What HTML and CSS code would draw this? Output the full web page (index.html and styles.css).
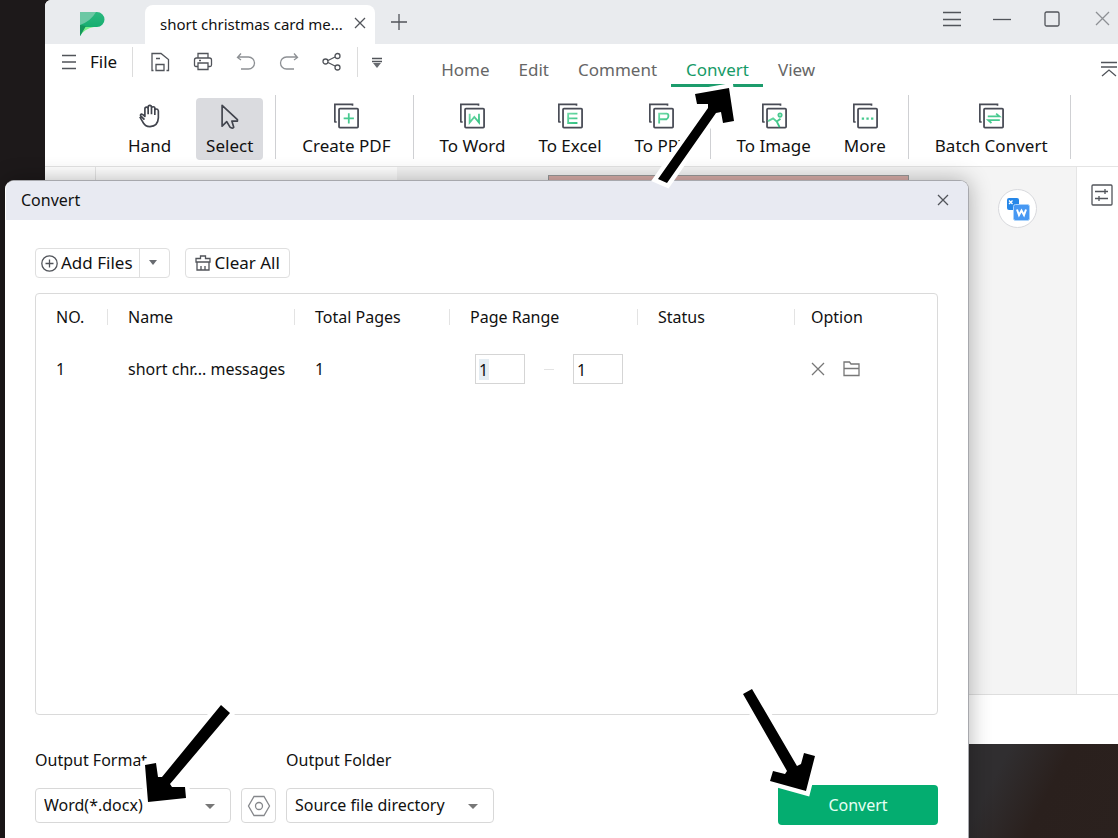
FILE: index.html
```html
<!DOCTYPE html>
<html lang="en">
<head>
<meta charset="utf-8">
<title>Convert</title>
<link rel="stylesheet" href="styles.css">
</head>
<body>
<svg class="defs" aria-hidden="true">
  <defs>
    <linearGradient id="leaf" x1="0" y1="0" x2="0" y2="1"><stop offset="0" stop-color="#2bb87f"/><stop offset="1" stop-color="#0aa866"/></linearGradient>
    <linearGradient id="mint" gradientUnits="userSpaceOnUse" x1="10" y1="10" x2="22" y2="23"><stop offset="0" stop-color="#7be0ae"/><stop offset="1" stop-color="#2fbf80"/></linearGradient>
    <symbol id="sheets" viewBox="0 0 28 28"><path d="M2 21V1.500H21V3M2 20.500H4" fill="none" stroke="#484b55" stroke-width="1.800"/><rect x="6.500" y="6" width="20.500" height="20.500" rx="1" fill="#fff" stroke="#484b55" stroke-width="1.900"/></symbol>
  </defs>
</svg>

<main class="app">
  <header class="titlebar">
    <svg class="logo" viewBox="0 0 26 26"><path d="M1 1H18A7.500 7.500 0 0 1 18 16H7L1 25Z" fill="url(#leaf)"/><path d="M1 1H17Q12 10 1 14Z" fill="#6cc8a4"/><path d="M6 16H15Q5 18 1 25Z" fill="#7df08a"/><path d="M1 14L7 15L1 25Z" fill="#16965c"/></svg>
    <div class="doc-tab"><span>short christmas card me...</span><button class="plain" aria-label="Close tab"><svg width="12" height="12" viewBox="0 0 12 12"><path d="M1 1L11 11M11 1L1 11"/></svg></button></div>
    <button class="plain new-tab" aria-label="New tab"><svg width="16" height="16" viewBox="0 0 16 16"><path d="M8 0V16M0 8H16"/></svg></button>
    <div class="window-buttons">
      <button class="plain" aria-label="Menu"><svg width="20" height="20" viewBox="0 0 20 20"><path d="M1 3.500H19M1 10.500H19M1 16.500H19"/></svg></button>
      <button class="plain" aria-label="Minimize"><svg width="20" height="20" viewBox="0 0 20 20"><path d="M1 10.500H19"/></svg></button>
      <button class="plain" aria-label="Maximize"><svg width="20" height="20" viewBox="0 0 20 20"><rect x="3" y="3" width="14" height="14" rx="1.500"/></svg></button>
      <button class="plain faint" aria-label="Close"><svg width="20" height="20" viewBox="0 0 20 20"><path d="M4 3L17 16M17 3L4 16"/></svg></button>
    </div>
  </header>

  <div class="menu-row">
    <div class="quick">
      <button class="plain file"><svg width="14" height="16" viewBox="0 0 14 16"><path d="M0 1.500H14M0 8H14M0 14.500H14"/></svg>File</button>
      <div class="quick-icons">
        <button class="plain" aria-label="Save"><svg width="20" height="20" viewBox="0 0 20 20"><path d="M3.500 18.500H2V1.500H11L18.500 7.500V18.500H16.500M6 18.500V12.500H14V18.500ZM6 6.500H10"/></svg></button>
        <button class="plain" aria-label="Print"><svg width="20" height="20" viewBox="0 0 20 20"><path d="M5 6V1.500H15V6M4.500 14.500H3Q1.500 14.500 1.500 13V8Q1.500 6 3.500 6H16.500Q18.500 6 18.500 8V13Q18.500 14.500 17 14.500H15.500M5 11H15V17.500H5ZM6 8.500H8"/></svg></button>
        <button class="plain faint" aria-label="Undo"><svg width="20" height="20" viewBox="0 0 20 20"><path d="M5 1.500L1.500 5.500L5 8M2 5H12.500A6 6 0 0 1 12.500 17H5"/></svg></button>
        <button class="plain faint" aria-label="Redo"><svg width="20" height="20" viewBox="0 0 20 20"><path d="M15 1.500L18.500 5.500L15 8M18 5H7.500A6 6 0 0 0 7.500 17H15"/></svg></button>
        <button class="plain" aria-label="Share"><svg width="20" height="20" viewBox="0 0 20 20"><circle cx="3.500" cy="9.500" r="2.500"/><circle cx="15.500" cy="4" r="2.500"/><circle cx="15.500" cy="15.500" r="2.500"/><path d="M6 8.500L13 5M6 10.500L13 14"/></svg></button>
      </div>
      <button class="plain" aria-label="More tools"><svg width="10" height="12" viewBox="0 0 10 12"><path d="M0 2.500H10M0 5.500H10"/><path d="M1 7H9L5 12Z" class="solid"/></svg></button>
    </div>
    <nav class="tabs">
      <a href="#home">Home</a><a href="#edit">Edit</a><a href="#comment">Comment</a><a href="#convert" class="active">Convert</a><a href="#view">View</a>
    </nav>
    <button class="plain collapse" aria-label="Collapse ribbon"><svg width="17" height="18" viewBox="0 0 17 18"><path d="M0 2.500H16M0 7H16M1 16L8 10L15 16"/></svg></button>
  </div>

  <div class="ribbon">
    <div class="group first">
      <button class="tool"><svg viewBox="0 0 28 28"><path class="line" d="M8 18L4.500 14.500Q3 13 4.500 12Q6 11.500 8.500 14.500V6.500Q8.500 4.500 10.200 4.500T12 6.500V12M12 6V4.500Q12 2.500 13.800 2.500T15.600 4.500V12M15.600 5.500Q15.600 4 17.500 4T19.200 6V13M19.200 8Q19.500 6.500 21 6.500T23 8.500V16Q22.500 25 14 25.500Q8.500 25.500 6 20L3 15"/></svg>Hand</button>
      <button class="tool selected"><svg viewBox="0 0 28 28"><path class="line" d="M5.500 2.500V25L10.500 20L14 26Q16.500 28 18 26L16 19.500H22V18Z"/></svg>Select</button>
    </div>
    <div class="group">
      <button class="tool"><svg viewBox="0 0 28 28"><use href="#sheets"/><path class="green" d="M17 11V22M11.500 16.500H22.500"/></svg>Create PDF</button>
    </div>
    <div class="group">
      <button class="tool"><svg viewBox="0 0 28 28"><use href="#sheets"/><path class="mint" d="M11.500 11.500V21L16.500 15L21.500 21V11.500"/></svg>To Word</button>
      <button class="tool"><svg viewBox="0 0 28 28"><use href="#sheets"/><path class="mint" d="M22 11.500H12V21.500H22M12 16.500H22"/></svg>To Excel</button>
      <button class="tool"><svg viewBox="0 0 28 28"><use href="#sheets"/><path class="mint" d="M12 22V11.500H20Q22 11.500 22 14T20 17.500H12"/></svg>To PPT</button>
    </div>
    <div class="group">
      <button class="tool"><svg viewBox="0 0 28 28"><use href="#sheets"/><path class="mint" d="M7.500 19.500L13 16.500L17 20L20 26M17 20L21 17"/><circle class="green" cx="20.500" cy="13" r="1.800"/></svg>To Image</button>
      <button class="tool"><svg viewBox="0 0 28 28"><use href="#sheets"/><path class="dots" d="M10.500 15.500h2.500v2.500h-2.500zM15.500 15.500h2.500v2.500h-2.500zM20.500 15.500h2.500v2.500h-2.500z"/></svg>More</button>
    </div>
    <div class="group">
      <button class="tool"><svg viewBox="0 0 28 28"><use href="#sheets"/><path class="green" d="M10.500 14.300H23L19.500 11.500M23.500 18.500H11L14.500 21.500"/></svg>Batch Convert</button>
    </div>
  </div>

  <div class="workspace">
    <div class="rail"></div>
    <div class="thumbs"></div>
    <div class="canvas">
      <div class="page"></div>
      <button class="plain word-badge" aria-label="PDF to Word"><svg width="24" height="24" viewBox="0 0 24 24"><rect x="1" y="1" width="12" height="12" rx="2" fill="#2687e8"/><path d="M3 3.500L6.500 7M6.500 3.500L3 7" stroke="#fff"/><rect x="7.500" y="7.500" width="16" height="16" rx="2" fill="#4798f3" stroke="#a9d2fb" stroke-width="1"/><path d="M11 12.500L13 18L15.500 13.500L18 18L20 12.500" stroke="#fff" stroke-width="2" fill="none"/></svg></button>
    </div>
    <aside class="side"><button class="plain" aria-label="Properties"><svg width="22" height="22" viewBox="0 0 22 22"><rect x="1" y="1" width="20" height="20" rx="1"/><path d="M4 7.500H17M14 5V10M4 14.500H17M8 12V17"/></svg></button></aside>
  </div>
  <footer class="statusbar"></footer>
</main>

<section class="dialog" role="dialog" aria-label="Convert">
  <header class="dialog-head"><span>Convert</span><button class="plain" aria-label="Close dialog"><svg width="12" height="12" viewBox="0 0 12 12"><path d="M1 1L11 11M11 1L1 11"/></svg></button></header>
  <div class="dialog-body">
    <div class="actions">
      <div class="split">
        <button class="add"><svg width="17" height="17" viewBox="0 0 17 17"><circle cx="8.500" cy="8.500" r="7.700"/><path d="M8.500 4.500V12.500M4.500 8.500H12.500"/></svg>Add Files</button>
        <button class="more" aria-label="Add options"><svg width="8" height="6" viewBox="0 0 8 6"><path class="solid" d="M0 0H8L4 5Z"/></svg></button>
      </div>
      <button class="clear"><svg width="16" height="16" viewBox="0 0 16 16"><path d="M1 7V3.500H5.500V1H10.500V3.500H15V7ZM2 7V15H14V7M6 15V11M10 15V11"/></svg>Clear All</button>
    </div>

    <div class="list">
      <table>
        <colgroup><col class="c-no"><col class="c-name"><col class="c-total"><col class="c-range"><col class="c-status"><col></colgroup>
        <thead><tr><th>NO.</th><th>Name</th><th>Total Pages</th><th>Page Range</th><th>Status</th><th>Option</th></tr></thead>
        <tbody><tr>
          <td>1</td><td>short chr... messages</td><td>1</td>
          <td><div class="range"><input class="marked" aria-label="First page" value="1"><span class="dash"></span><input aria-label="Last page" value="1"></div></td>
          <td></td>
          <td><div class="row-tools">
            <button class="plain" aria-label="Remove"><svg width="14" height="14" viewBox="0 0 14 14"><path d="M1 1L13 13M13 1L1 13"/></svg></button>
            <button class="plain" aria-label="Open folder"><svg width="17" height="16" viewBox="0 0 17 16"><path d="M1 14.500V1H6.500L8 3H16V14.500ZM1 7.500H16"/></svg></button>
          </div></td>
        </tr></tbody>
      </table>
    </div>

    <div class="output">
      <div class="field format">
        <label for="format">Output Format</label>
        <span class="select"><select id="format"><option>Word(*.docx)</option></select></span>
      </div>
      <button class="settings" aria-label="Format settings"><svg width="24" height="24" viewBox="0 0 24 24"><path d="M7 2.500H17L22.500 12L17 21.500H7L1.500 12Z"/><circle cx="12" cy="12" r="3.500"/></svg></button>
      <div class="field folder">
        <label for="folder">Output Folder</label>
        <span class="select"><select id="folder"><option>Source file directory</option></select></span>
      </div>
      <button class="convert">Convert</button>
    </div>
  </div>
</section>

<svg class="arrows" viewBox="0 0 1118 838" aria-hidden="true">
  <path d="M658 179L708 108L708 104L697 104L695 94L729 88L734 121L723 123L721 112L716 113L667 183Z"/>
  <path d="M221 705L162 777L158 777L156 763L145 765L148 802L186 798L185 787L172 787L170 784L230 713Z"/>
  <path d="M743 694L752 689L797 766L801 764L804 753L815 756L806 791L770 781L773 771L785 774L787 771Z"/>
</svg>
</body>
</html>
```
FILE: styles.css
```css
* { box-sizing: border-box; }

body {
  margin: 0;
  height: 100vh;
  overflow: hidden;
  position: relative;
  font: 16px/24px "Noto Sans", "Noto Sans CJK SC", sans-serif;
  color: #111;
  background: linear-gradient(117deg, #1d191a 0%, #1d191a 30%, #302f31 60%, #302e30 90%, #2a201d 94%, #2b211e 100%);
}

button, input, select { font: inherit; color: inherit; }
button { cursor: pointer; }
svg { display: block; flex: none; fill: none; stroke: #51545a; stroke-width: 1.3; }
.solid { fill: #686b70; stroke: none; }
.defs { position: absolute; width: 0; height: 0; }
.plain { display: flex; align-items: center; padding: 0; border: 0; background: none; }
.faint svg { stroke: #8d9094; }

.app { margin-left: 45px; background: #fff; border-radius: 6px 0 0 0; overflow: hidden; }

.titlebar { display: flex; height: 44px; background: #e9ebee; }
.logo { width: 26px; height: 26px; margin: 11px 40px 0 34px; stroke: none; }
.doc-tab {
  display: flex; align-items: center; gap: 8px;
  width: 230px; margin-top: 5px; padding: 0 9px 2px 15px;
  background: #fff; border-radius: 8px 8px 0 0; white-space: nowrap;
  font-size: 15px;
}
.doc-tab button { margin: 0 0 2px auto; }
.new-tab { margin-left: 16px; }
.window-buttons { display: flex; gap: 30px; margin-left: auto; padding: 0 6px 6px 0; }

.menu-row { display: flex; height: 46px; font-size: 17px; }
.quick { display: flex; align-items: center; height: 36px; padding-left: 17px; }
.file { gap: 14px; }
.quick-icons {
  display: flex; align-items: center; gap: 23px; height: 30px;
  margin: 0 14px 0 15px; padding: 0 15px 0 17px;
  border: solid #dcdcdc; border-width: 0 1px;
}
.tabs { display: flex; height: 43px; margin-left: 44px; }
.tabs a { padding: 14px 14px 0 15px; color: #666; text-decoration: none; }
.tabs .active { color: #169b67; border-bottom: 3px solid #1c9c6c; }
.collapse { height: 50px; margin-left: auto; }

.ribbon { display: flex; padding: 5px 0 7px; height: 77px; border-bottom: 1px solid #e4e4e4; font-size: 17px; }
.group { display: flex; gap: 13px; padding: 0 12px 0 16px; border-right: 1px solid #cfd0d3; }
.group.first { gap: 15px; padding-left: 73px; }
.tool {
  display: flex; flex-direction: column; align-items: center; gap: 5px;
  height: 62px; margin-top: 3px; padding: 5px 10px 0;
  border: 0; border-radius: 4px; background: none; white-space: nowrap;
}
.tool svg { width: 26px; height: 26px; }
.tool.selected { background: #dadbdf; }
.line { stroke: #41444d; stroke-width: 1.8; stroke-linejoin: round; }
.green { stroke: #48ca90; stroke-width: 1.9; }
.mint { stroke: url(#mint); stroke-width: 2; }
.dots { fill: #48ca90; stroke: none; }

.workspace { display: flex; height: 527px; background: #fff; }
.rail { width: 51px; border-right: 1px solid #e6e6e6; }
.thumbs { width: 301px; }
.canvas { display: flex; flex: 1; justify-content: flex-end; gap: 89px; padding-right: 39px; background: #f4f4f4; border-right: 1px solid #e5e5e5; }
.page { width: 361px; margin-top: 8px; background: #d9aea9; border: 1px solid #999; border-bottom: 0; }
.word-badge { justify-content: center; width: 39px; height: 39px; margin-top: 22px; border: 1px solid #d8d9dd; border-radius: 50%; background: #fff; }
.word-badge svg { stroke: none; }
.side { width: 41px; padding: 17px 0 0 14px; }
.statusbar { height: 50px; border-top: 1px solid #dedede; background: #fff; }

/* Window floating over the application */
.dialog {
  position: absolute; left: 5px; right: 149px; top: 180px;
  border: 1px solid; border-color: #a7a8ad #a7a8ad #fff #fff; border-radius: 9px 9px 0 0;
  background: #fff; box-shadow: 0 0 22px rgba(0, 0, 0, .3);
}
.dialog-head { display: flex; align-items: center; justify-content: space-between; height: 39px; padding: 0 19px 2px 15px; background: #e8eaf2; border-radius: 8px 8px 0 0; }
.dialog-body { padding: 28px 30px 30px 29px; }
.actions { display: flex; gap: 15px; margin-bottom: 15px; font-size: 17px; }
.split, .clear { display: flex; align-items: center; height: 30px; border: 1px solid #dfdfdf; border-radius: 4px; background: #fff; }
.split button { display: flex; align-items: center; height: 28px; padding: 0; border: 0; background: none; }
.split .add { gap: 3px; padding: 0 6px 0 5px; }
.split .more { justify-content: center; width: 30px; padding-right: 2px; border-left: 1px solid #dfdfdf; }
.clear { gap: 4px; padding: 0 9px; }

.list { height: 422px; border: 1px solid #dadada; border-radius: 4px; }
table { width: 100%; table-layout: fixed; border-collapse: collapse; }
.c-no { width: 72px; }
.c-name { width: 187px; }
.c-total { width: 155px; }
.c-range { width: 188px; }
.c-status { width: 157px; }
th, td { padding: 0 0 0 20px; text-align: left; font-weight: 400; white-space: nowrap; }
th { height: 45px; background: linear-gradient(#e3e3e3, #e3e3e3) right 50% / 1px 16px no-repeat; }
th:last-child { padding-left: 16px; background: none; }
td { height: 60px; }
.range { display: flex; align-items: center; gap: 19px; padding-left: 5px; }
.range input { width: 50px; height: 30px; padding: 2px 3px 0; border: 1px solid #d5d5d5; background: #fff; }
.range .marked { background: linear-gradient(#e5edf3, #e5edf3) 3px 4px / 10px 21px no-repeat #fff; }
.dash { width: 10px; height: 1px; background: #e3e3e3; }
.row-tools { display: flex; align-items: center; gap: 18px; }
.row-tools svg { stroke: #777; }
td:last-child { padding-left: 16px; }

.output { display: flex; align-items: flex-end; gap: 10px; padding-top: 33px; }
.field { display: flex; flex-direction: column; gap: 16px; margin-bottom: 2px; }
.format { width: 196px; }
.folder { width: 208px; }
.select { position: relative; }
.select::after {
  content: ""; position: absolute; right: 16px; top: 16px;
  border: solid transparent; border-width: 5px 5px 0; border-top-color: #777;
}
.select select { display: block; appearance: none; width: 100%; height: 35px; padding: 0 8px 2px; border: 1px solid #d8d8d8; border-radius: 4px; background: #fff; }
.settings { display: flex; align-items: center; justify-content: center; width: 35px; height: 35px; margin-bottom: 2px; padding: 0; border: 1px solid #d8d8d8; border-radius: 4px; background: #fff; }
.settings svg { stroke: #85878b; }
.convert { width: 160px; height: 40px; margin-left: auto; border: 0; border-radius: 4px; background: #04ad70; color: #e5fff4; }

/* Pointer annotations over the desktop */
.arrows { position: absolute; left: 0; top: 0; width: 1118px; height: 838px; pointer-events: none; }
.arrows path { fill: #000; stroke: #fff; stroke-width: 9; paint-order: stroke; }
```
